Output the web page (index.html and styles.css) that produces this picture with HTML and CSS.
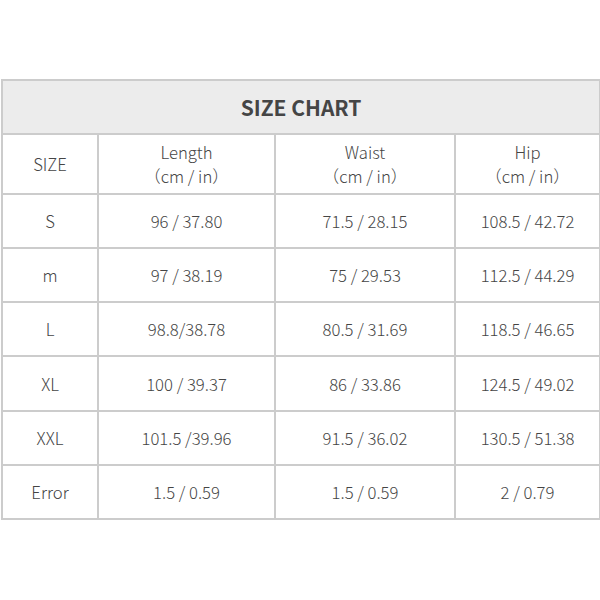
FILE: index.html
```html
<!DOCTYPE html>
<html>
<head>
<meta charset="utf-8">
<link rel="stylesheet" href="styles.css">
</head>
<body>
<div class="wrap">
<table class="chart">
  <colgroup>
    <col class="c1"><col class="c2"><col class="c3"><col class="c4">
  </colgroup>
  <tr class="title-row"><th colspan="4">SIZE CHART</th></tr>
  <tr class="head-row">
    <td>SIZE</td>
    <td>Length<br>（cm / in）</td>
    <td>Waist<br>（cm / in）</td>
    <td>Hip<br>（cm / in）</td>
  </tr>
  <tr><td>S</td><td>96 / 37.80</td><td>71.5 / 28.15</td><td>108.5 / 42.72</td></tr>
  <tr><td>m</td><td>97 / 38.19</td><td>75 / 29.53</td><td>112.5 / 44.29</td></tr>
  <tr><td>L</td><td>98.8/38.78</td><td>80.5 / 31.69</td><td>118.5 / 46.65</td></tr>
  <tr class="tall"><td>XL</td><td>100 / 39.37</td><td>86 / 33.86</td><td>124.5 / 49.02</td></tr>
  <tr><td>XXL</td><td>101.5 /39.96</td><td>91.5 / 36.02</td><td>130.5 / 51.38</td></tr>
  <tr><td>Error</td><td>1.5 / 0.59</td><td>1.5 / 0.59</td><td>2 / 0.79</td></tr>
</table>
</div>
</body>
</html>
```

FILE: styles.css
```css
html, body {
  margin: 0;
  padding: 0;
  background: #ffffff;
}
.wrap {
  padding: 79px 0 0 1px;
}
.chart {
  width: 598px;
  border-collapse: collapse;
  table-layout: fixed;
  font-family: "Noto Sans CJK SC", "Noto Sans", sans-serif;
  font-weight: 300;
  color: #454545;
  font-size: 16.7px;
}
.c1 { width: 96px; }
.c2 { width: 177px; }
.c3 { width: 180px; }
.c4 { width: 145px; }
.chart th, .chart td {
  border: 2px solid #cccccc;
  text-align: center;
  vertical-align: middle;
  padding: 0;
}
.chart .title-row th {
  background: #ececec;
  height: 52px;
  font-size: 21px;
  font-weight: 700;
  color: #454545;
}
.chart tr td {
  height: 52px;
}
.chart .tall td {
  height: 53px;
}
.chart .head-row td {
  height: 58px;
  line-height: 24px;
}
```
